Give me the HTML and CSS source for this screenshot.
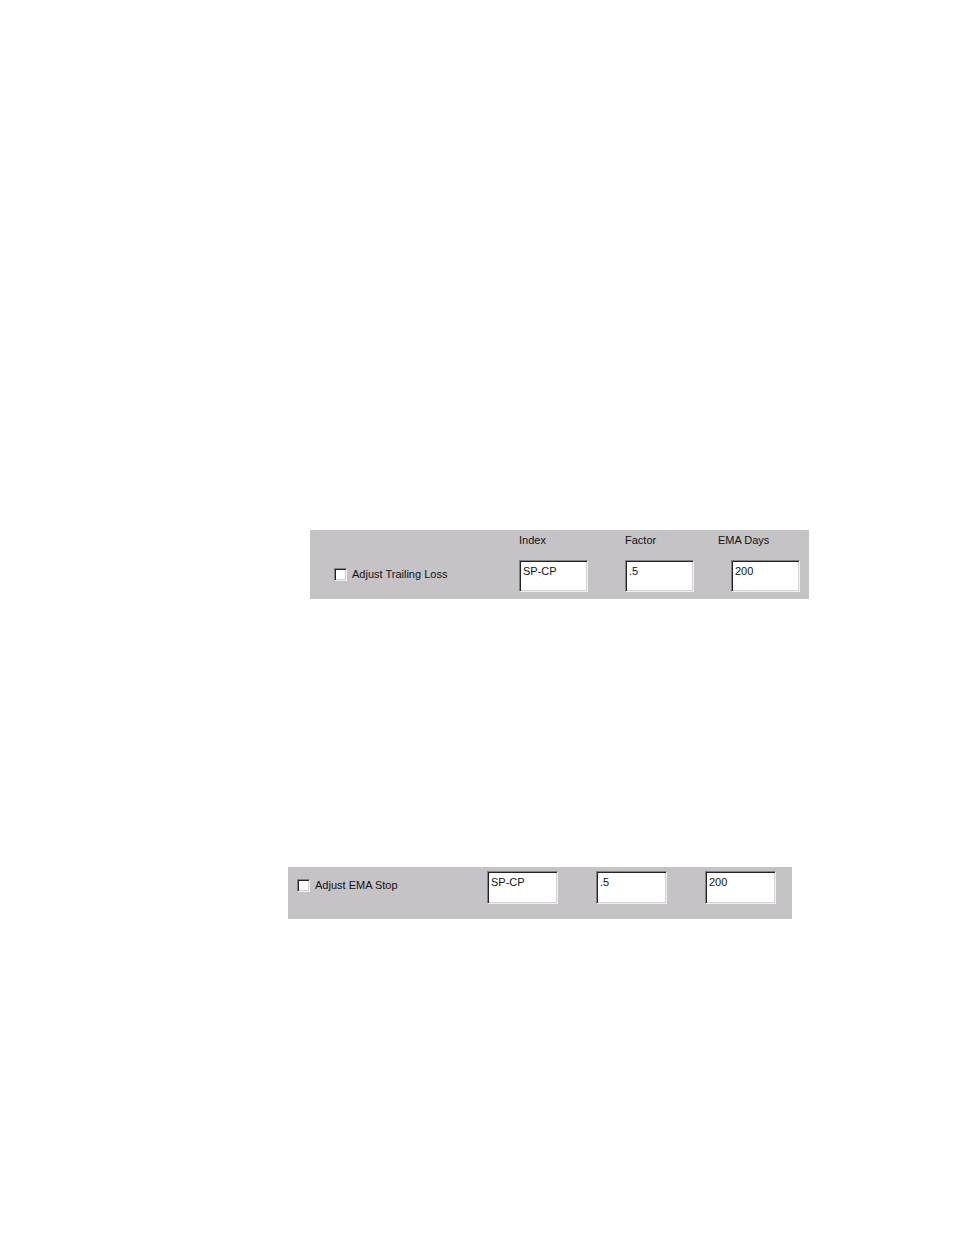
FILE: index.html
```html
<!DOCTYPE html>
<html lang="en">
<head>
<meta charset="UTF-8" />
<meta name="viewport" content="width=device-width, initial-scale=1" />
<title>Adjust Stops</title>
<link rel="stylesheet" href="styles.css">
</head>
<body>

<form class="page">
  <section class="panel trailing">
    <div class="headings">
      <label for="lossIndex">Index</label>
      <label for="lossFactor">Factor</label>
      <label for="lossDays">EMA Days</label>
    </div>
    <div class="fields">
      <label class="option"><input type="checkbox" class="check" /> Adjust Trailing Loss</label>
      <input type="text" class="box" id="lossIndex" value="SP-CP" />
      <input type="text" class="box" id="lossFactor" value=".5" />
      <input type="text" class="box" id="lossDays" value="200" />
    </div>
  </section>

  <section class="panel ema">
    <div class="fields">
      <label class="option"><input type="checkbox" class="check" /> Adjust EMA Stop</label>
      <input type="text" class="box" aria-label="Index" value="SP-CP" />
      <input type="text" class="box" aria-label="Factor" value=".5" />
      <input type="text" class="box" aria-label="EMA Days" value="200" />
    </div>
  </section>
</form>

</body>
</html>
```

FILE: styles.css
```css
body {
  margin: 0;
  background: #fff;
  color: #111;
  font-family: "Liberation Sans", Arial, sans-serif;
  font-size: 11px;
  line-height: 14px;
}
.page {
  display: flex;
  flex-direction: column;
  gap: 268px;
  padding: 530px 0 40px;
}
.panel {
  background: #c6c3c6;
}
.trailing {
  margin: 0 145px 0 310px;
  padding: 3px 9px 7px 24px;
}
.ema {
  margin: 0 162px 0 288px;
  padding: 4px 16px 15px 9px;
}
.headings {
  display: grid;
  grid-template-columns: 69px 56px 82px;
  justify-content: end;
  gap: 37px;
  margin-bottom: 13px;
}
.fields {
  display: grid;
  grid-template-columns: 1fr 69px 69px 69px;
  gap: 37px;
}
.ema .fields {
  grid-template-columns: 1fr 71px 71px 71px;
  gap: 38px;
}
.option {
  display: flex;
  align-items: center;
  gap: 5px;
  white-space: nowrap;
  height: 28px;
}
.check,
.box {
  appearance: none;
  box-sizing: border-box;
  margin: 0;
  background: #fff;
  border: 1px solid;
  border-color: #848284 #efefef #efefef #848284;
  border-radius: 0;
  box-shadow: inset 1px 1px #222, inset -1px -1px #d6d3d6;
}
.check {
  width: 13px;
  height: 13px;
}
.check:checked {
  background: radial-gradient(#000 3px, #fff 4px);
}
.box {
  width: 100%;
  height: 32px;
  padding: 1px 2px 12px 3px;
  color: #111;
  font: inherit;
}
.ema .box {
  height: 33px;
}
```
